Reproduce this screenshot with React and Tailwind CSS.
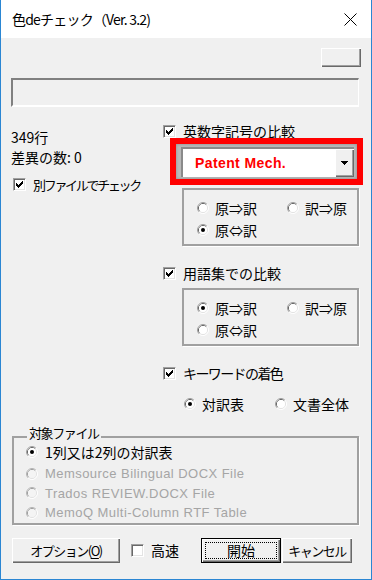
const jp = "font-['Noto_Sans_CJK_JP',sans-serif]";

function Check({ checked }) {
  return (
    <span className="flex h-[13px] w-[13px] shrink-0 items-center justify-center border border-t-[#a0a0a0] border-l-[#a0a0a0] border-b-white border-r-white bg-white shadow-[inset_1px_1px_0_#696969,inset_-1px_-1px_0_#e3e3e3]">
      {checked ? (
        <svg width="7" height="7" viewBox="0 0 7 7" shapeRendering="crispEdges">
          <path d="M0 2 L2 4 L6 0 L7 0 L7 2.5 L2 7 L0 5 Z" fill="#000" />
        </svg>
      ) : null}
    </span>
  );
}

function Radio({ checked, disabled }) {
  return (
    <svg width="12" height="12" viewBox="0 0 12 12" className="shrink-0">
      <path d="M2.11 9.89 A5.5 5.5 0 0 1 9.89 2.11" fill="none" stroke={disabled ? '#b4b4b4' : '#a0a0a0'} />
      <path d="M9.89 2.11 A5.5 5.5 0 0 1 2.11 9.89" fill="none" stroke="#ffffff" />
      <path d="M2.82 9.18 A4.5 4.5 0 0 1 9.18 2.82" fill="none" stroke={disabled ? '#a0a0a0' : '#696969'} />
      <path d="M9.18 2.82 A4.5 4.5 0 0 1 2.82 9.18" fill="none" stroke="#e3e3e3" />
      <circle cx="6" cy="6" r="4" fill={disabled ? '#f4f4f4' : '#ffffff'} />
      {checked ? <circle cx="6" cy="6" r="2" fill="#000" /> : null}
    </svg>
  );
}

function CheckRow({ label, checked, className = '', textClass = 'text-[14px]' }) {
  return (
    <div className={`flex items-center gap-[7px] ${className}`}>
      <Check checked={checked} />
      <span className={`whitespace-nowrap leading-[19px] text-black ${textClass}`}>{label}</span>
    </div>
  );
}

function RadioItem({ label, checked, disabled, className = '' }) {
  return (
    <div className={`flex h-[18px] items-center gap-[6px] ${className}`}>
      <Radio checked={checked} disabled={disabled} />
      <span className="whitespace-nowrap text-[14px] leading-[18px] text-black">{label}</span>
    </div>
  );
}

function DirectionFrame({ selected, className = '' }) {
  return (
    <div className={`h-[58px] w-[177px] border-2 border-[#a0a0a0] pl-[13px] pt-[9px] shadow-[1px_1px_0_#ffffff] ${className}`}>
      <div className="flex">
        <RadioItem label="原⇒訳" checked={selected === 0} className="w-[90px]" />
        <RadioItem label="訳⇒原" checked={selected === 1} />
      </div>
      <RadioItem label="原⇔訳" checked={selected === 2} className="mt-[4px]" />
    </div>
  );
}

function WinButton({ children, className = '' }) {
  return (
    <button className={`flex h-[25px] items-center justify-center bg-[#f0f0f0] text-black shadow-[inset_1px_1px_0_#ffffff,inset_-1px_-1px_0_#696969,inset_-2px_-2px_0_#a0a0a0] ${className}`}>
      {children}
    </button>
  );
}

export default function App() {
  return (
    <div className={`flex h-[580px] w-[372px] flex-col border-x border-b border-[#2a86d3] bg-[#f0f0f0] ${jp}`}>
      <div className="flex h-[38px] shrink-0 items-center justify-between bg-white pl-[11px] pr-[14px]">
        <span className="whitespace-pre text-[14px] leading-[20px] tracking-[-0.8px] text-black">色deチェック（Ver. 3.2)</span>
        <svg width="13" height="13" viewBox="0 0 13 13">
          <path d="M0.5 0.5 L12.5 12.5 M12.5 0.5 L0.5 12.5" stroke="#000" strokeWidth="1" />
        </svg>
      </div>

      <div className="mt-[10px] flex justify-end pr-[10px]">
        <WinButton className="w-[40px] !h-[19px]" />
      </div>

      <div className="ml-[10px] mt-[11px] h-[29px] w-[348px] border-l-2 border-t-2 border-b-2 border-r border-l-[#808080] border-t-[#808080] border-b-white border-r-white bg-[#f0f0f0]" />

      <div className="mt-[17px] flex">
        <div className="ml-[10px] w-[152px] shrink-0 pt-[3px]">
          <p className="h-[20px] text-[14px] leading-[20px] text-black">349行</p>
          <p className="h-[20px] text-[14px] leading-[20px] text-black">差異の数: 0</p>
          <CheckRow label="別ファイルでチェック" checked className="ml-[2px] mt-[8px] h-[19px]" textClass="text-[13px] tracking-[-2.3px]" />
        </div>

        <div className="flex flex-col">
          <CheckRow label="英数字記号の比較" checked className="h-[14px]" />

          <div className="ml-[7px] h-[47px] w-[193px] border-[6px] border-[#ff0000] bg-[#b9b9b9] pb-[2px] pl-[5px] pr-[3px] pt-[3px] shadow-[inset_0_0_3px_#8a8a8a]">
            <div className="flex h-full items-stretch border-l-2 border-t-2 border-l-[#8a8a8a] border-t-[#8a8a8a] bg-white">
              <div className="flex flex-1 items-center pl-[12px]">
                <span className="font-['Liberation_Sans',sans-serif] text-[14px] font-bold tracking-[0.4px] text-[#ff0000]">Patent Mech.</span>
              </div>
              <div className="flex w-[19px] items-center justify-center bg-[#f0f0f0] shadow-[inset_1px_1px_0_#ffffff,inset_-1px_-1px_0_#696969,inset_-2px_-2px_0_#a0a0a0]">
                <svg width="7" height="4" viewBox="0 0 7 4" shapeRendering="crispEdges">
                  <path d="M0 0 L7 0 L3.5 4 Z" fill="#000" />
                </svg>
              </div>
            </div>
          </div>

          <DirectionFrame selected={2} className="ml-[19px] mt-[3px]" />

          <CheckRow label="用語集での比較" checked className="mt-[18px] h-[19px]" />
          <DirectionFrame selected={0} className="ml-[19px] mt-[5px]" />

          <CheckRow label="キーワードの着色" checked className="mt-[18px] h-[19px]" textClass="text-[14px] tracking-[-1.6px]" />
          <div className="ml-[21px] mt-[11px] flex h-[19px] items-center">
            <RadioItem label="対訳表" checked className="w-[91px]" />
            <RadioItem label="文書全体" />
          </div>
        </div>
      </div>

      <div className="relative ml-[11px] mt-[23px] h-[89px] w-[347px] border-2 border-[#a0a0a0] pl-[12px] pt-[5px] shadow-[1px_1px_0_#ffffff]">
        <span className="absolute left-[13px] top-[-11px] bg-[#f0f0f0] px-[2px] text-[13px] leading-[12px] tracking-[-1.4px] text-black">対象ファイル</span>
        <div className="flex h-[18px] items-center gap-[7px]">
          <Radio checked />
          <span className="text-[14px] leading-[12px] text-black">1列又は2列の対訳表</span>
        </div>
        {['Memsource Bilingual DOCX File', 'Trados REVIEW.DOCX File', 'MemoQ Multi-Column RTF Table'].map((label, i) => (
          <div key={label} className={`flex h-[19.5px] items-center gap-[7px] ${i === 0 ? 'mt-[3px]' : ''}`}>
            <Radio disabled />
            <span className="font-['Liberation_Sans',sans-serif] text-[13px] leading-[19px] tracking-[0.45px] text-[#a5a5a5]">{label}</span>
          </div>
        ))}
      </div>

      <div className="ml-[11px] mt-[13px] flex items-center">
        <WinButton className="w-[108px] text-[13px] tracking-[-1.5px]">
          オプション(<span className="underline underline-offset-2">O</span>)
        </WinButton>
        <div className="ml-[11px] flex w-[70px] items-center gap-[7px]">
          <Check />
          <span className="text-[14px] leading-[19px] text-black">高速</span>
        </div>
        <div className="flex h-[25px] w-[80px] border border-black">
          <WinButton className="!h-full flex-1 p-[3px]">
            <span className="flex h-full w-full items-center justify-center border border-dotted border-black text-[14px]">開始</span>
          </WinButton>
        </div>
        <WinButton className="ml-[1px] w-[70px] text-[13px] tracking-[-1.5px]">キャンセル</WinButton>
      </div>
    </div>
  );
}
